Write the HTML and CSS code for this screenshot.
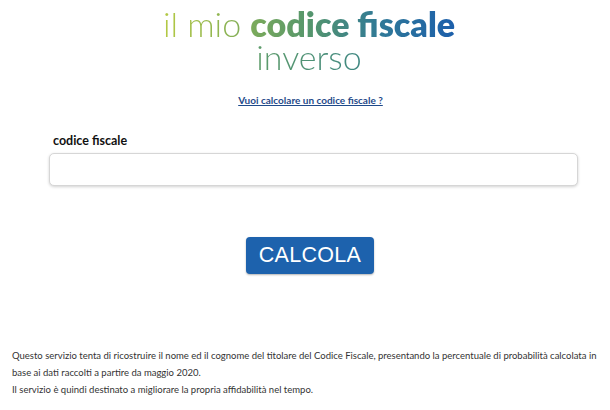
FILE: index.html
```html
<!DOCTYPE html>
<html lang="it">
<head>
<meta charset="utf-8">
<title>il mio codice fiscale inverso</title>
<link rel="stylesheet" href="styles.css">
</head>
<body>
<header class="logo">
  <div class="logo-line1"><span class="thin">il mio </span><span class="bold">codice fiscale</span></div>
  <div class="logo-line2">inverso</div>
</header>
<div class="link-row"><a href="#" class="calc-link">Vuoi calcolare un codice fiscale ?</a></div>
<form class="form">
  <label class="label" for="cf">codice fiscale</label>
  <input class="input" id="cf" type="text">
  <div class="btn-row"><button type="button" class="btn">CALCOLA</button></div>
</form>
<div class="info">
  <p>Questo servizio tenta di ricostruire il nome ed il cognome del titolare del Codice Fiscale, presentando la percentuale di probabilità calcolata in base ai dati raccolti a partire da maggio 2020.</p>
  <p>Il servizio è quindi destinato a migliorare la propria affidabilità nel tempo.</p>
</div>
</body>
</html>
```
FILE: styles.css
```css
html, body { margin: 0; padding: 0; background: #fff; }
body { font-family: "Lato", "Open Sans", sans-serif; color: #222; width: 610px; }

.logo { display: flex; flex-direction: column; align-items: center; padding-top: 7px; padding-left: 8px; }
.logo-line1 {
  font-size: 34px; line-height: 33px; letter-spacing: 0;
  background: linear-gradient(90deg, #b4c943 0%, #86b056 25%, #55966c 50%, #2f7898 75%, #1c5fab 100%);
  -webkit-background-clip: text; background-clip: text; color: transparent;
}
.thin { font-weight: 300; }
.bold { font-weight: 800; }
.logo-line2 {
  font-size: 34px; line-height: 33px; font-weight: 300; padding-bottom: 2px;
  background: linear-gradient(90deg, #5e9c6a 0%, #3f8782 100%);
  -webkit-background-clip: text; background-clip: text; color: transparent;
}

.link-row { text-align: center; margin-top: 13px; padding-left: 11px; }
.calc-link { font-size: 10px; font-weight: 700; color: #1f4a8a; text-decoration: underline; }

.form { padding: 0 32px 0 49px; margin-top: 26px; }
.label { display: block; font-size: 12.5px; font-weight: 700; color: #111; margin-left: 4px; }
.input {
  display: block; box-sizing: border-box; width: 529px; height: 33px; margin-top: 5px;
  border: 1px solid #d6d6d6; border-radius: 5px; box-shadow: 0 1px 3px rgba(0,0,0,0.18);
  background: #fff; outline: none;
}
.btn-row { display: flex; justify-content: center; margin-top: 51px; padding-right: 7px; }
.btn {
  width: 128px; height: 37px; border: none; border-radius: 4px;
  background: #1d62ad; color: #fff; font-family: "Liberation Sans", Arial, sans-serif;
  font-size: 21.5px; letter-spacing: 0.3px; padding: 0; box-shadow: 0 1px 2px rgba(0,0,0,0.3);
}

.info { padding: 0 12px; margin-top: 73px; font-size: 9.5px; line-height: 17px; color: #333; }
.info p { margin: 0; }
```
